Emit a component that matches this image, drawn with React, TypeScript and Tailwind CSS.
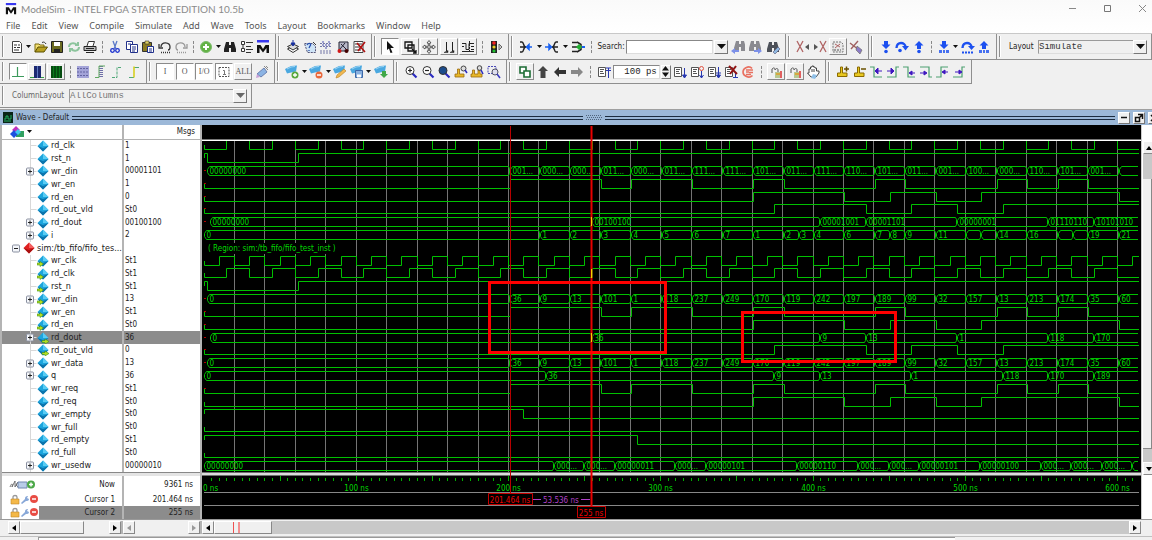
import React from 'react';

type Box = 'up' | 'down';
type Step = [number, number];
type Value = [number, string];

/* ---------- Toolbar icons, 14 x 14 ---------- */

const Sheet = () => (
    <>
        <path d="M1.5 2.5h7v9h-7z" fill="#fff" stroke="#555" />
        <path d="M3 4.5h4M3 6.5h3M3 8.5h4" stroke="#555" />
    </>
);

const Glass = ({ fill }: { fill: string }) => (
    <>
        <path d="M8.5 8.5l4 4" stroke="#2a2ac0" strokeWidth="2.2" />
        <circle cx="6" cy="5.5" r="4" fill={fill} stroke="#333" />
    </>
);

const Flag = () => (
    <>
        <path d="M0 4l6-3 6-.5-1 6-5 1-4 1z" fill="#4aa8e0" />
        <path d="M2 4l4-2 4-.5" stroke="#9cd4f4" fill="none" />
    </>
);

const Binoculars = ({ color }: { color: string }) => (
    <path d="M3 2h3v3h2V2h3l2 7v3H8V8H6v4H1V9z" fill={color} />
);

const BlueArrow = ({ up, dashed }: { up?: boolean; dashed?: boolean }) => (
    <g fill="#1c50f0">
        <path d={up ? 'M7 1l4.5 4.5H9V9H5V5.500H2.500z' : 'M5 1h4v3.500h2.500L7 9 2.500 4.500H5z'} />
        {dashed ? <path d="M2 10h3v3H2zM6 10h2v3H6zM9 10h3v3H9z" opacity=".8" /> : <circle cx="7" cy="11.500" r="1.800" />}
    </g>
);

const Stopper = ({ sign }: { sign: string }) => (
    <>
        <path d="M4.500 8V2h2v6H11v3.500H1.500V8z" fill="#e8c820" stroke="#8a6a00" />
        <path d={sign} stroke="#6a5000" strokeWidth="1.500" />
    </>
);

const ICONS: Record<string, React.ReactNode> = {
    new: (
        <>
            <path d="M2.500 1.500h7l2 2v9h-9z" fill="#fff" stroke="#444" />
            <path d="M4 5h3M8 5h2M4 7.500h2M7 7.500h3M4 10h5" stroke="#333" />
        </>
    ),
    open: (
        <>
            <path d="M1 12V4h4l1 1h4v2" fill="#f5e070" stroke="#7a6a10" />
            <path d="M1 12l3-5h9.500L10 12z" fill="#b8a020" stroke="#5a5000" />
            <path d="M8 2.500c2-1 3 0 4 1.500" stroke="#333" fill="none" />
        </>
    ),
    save: (
        <>
            <path d="M1.500 1.500h11v11h-11z" fill="#6a6a20" stroke="#222" />
            <path d="M4 2h6v4H4z" fill="#fff" />
            <path d="M4 9h6v4H4z" fill="#222" />
        </>
    ),
    refresh: (
        <g stroke="#8cc49c" strokeWidth="2" fill="none">
            <path d="M2 7c0-4 5-5 8-2M12 7c0 4-5 5-8 2" />
            <path d="M8 5h3V2M6 9H3v3" />
        </g>
    ),
    print: (
        <>
            <path d="M4 6l1.500-4.500h6L10 6" fill="#fff" stroke="#333" />
            <path d="M1 6.500h12v4H1z" fill="#bbb" stroke="#222" />
            <path d="M3 12.500h8M3 8.500h8" stroke="#222" strokeWidth="1.200" />
        </>
    ),
    cut: (
        <g fill="none" stroke="#1a30d0" strokeWidth="1.300">
            <path d="M5 1l3 8M9 1L6 9" stroke="#5a78c8" />
            <circle cx="4.500" cy="10.500" r="1.800" />
            <circle cx="9.500" cy="10.500" r="1.800" />
        </g>
    ),
    copy: (
        <g fill="#fff" stroke="#20308a">
            <path d="M1.500 1.500h6v8h-6z" />
            <path d="M5.500 4.500h7v8h-7z" />
            <path d="M3 4h3M7 7h4M7 9h4M7 11h3" />
        </g>
    ),
    paste: (
        <>
            <path d="M1.500 2.500h9v9h-9z" fill="#8a7a20" stroke="#333" />
            <path d="M4 1h4v3H4z" fill="#e0d060" stroke="#333" strokeWidth=".6" />
            <path d="M6.500 6.500h6v6h-6z" fill="#fff" stroke="#20308a" />
            <path d="M8 9h3M8 11h3" stroke="#20308a" />
        </>
    ),
    undo: (
        <g fill="none" stroke="#333" strokeWidth="1.300">
            <path d="M3 7c0-6 9-5 9 0 0 2-1 3-2 3" />
            <path d="M1 4v4h4" />
            <path d="M3 12.500h9" strokeDasharray="1 1" />
        </g>
    ),
    redo: (
        <g fill="none" stroke="#999" strokeWidth="1.300">
            <path d="M11 7c0-6-9-5-9 0 0 2 1 3 2 3" />
            <path d="M13 4v4H9" />
            <path d="M3 12.500h9" strokeDasharray="1 1" />
        </g>
    ),
    add: (
        <>
            <circle cx="7" cy="7" r="5.500" fill="#62b244" stroke="#7cbc6c" />
            <path d="M7 4v6M4 7h6" stroke="#fff" strokeWidth="2" />
        </>
    ),
    find: <Binoculars color="#222" />,
    tree: (
        <g fill="#fff" stroke="#333">
            <path d="M1.500 1.500h3v3h-3zM1.500 8.500h3v3h-3z" />
            <path d="M6 2.500h7M6 6.500h5M6 9.500h7M6 12.500h5M3 5v3" />
        </g>
    ),
    logo: (
        <>
            <path d="M1 0h12v2.500H1z" fill="#3838f0" />
            <path d="M1 13V5h3.500L7 9l2.500-4H13v8h-2.500V8L7 12.500 3.500 8v5z" fill="#111" />
        </>
    ),
    compile: (
        <g fill="#fff" stroke="#333">
            <path d="M1.500 9L7 12.500 12.500 9 7 6z" />
            <path d="M1.500 6.500L7 10l5.500-3.500L7 4z" fill="#ddd" />
            <path d="M7 0v4M5 3l2 3 2-3z" stroke="#1830a0" fill="#1830a0" />
        </g>
    ),
    compileAll: (
        <>
            <path d="M1.500 3.500h8l3 3v6h-8z" fill="#cfe4f6" stroke="#557" strokeDasharray="2 1" />
            <path d="M4 5c2-3 5-1 3 1L6 8M6 10v1" stroke="#2850b0" fill="none" strokeWidth="1.300" />
            <path d="M10 2l3 3" stroke="#333" />
        </>
    ),
    simulate: (
        <g stroke="#7478a8" strokeDasharray="2 1">
            <path d="M1 3.500h12M1 6.500h12M1 11h12M1 13h12" />
            <path d="M4 1v6M7 4v6M10 1v6" stroke="#4a50b0" />
        </g>
    ),
    simStop: (
        <>
            <path d="M3 2h9v9H3z" fill="#b8b8c8" stroke="#223" />
            <path d="M5 4l5 5M9 3l-5 6" stroke="#223" />
            <circle cx="3.500" cy="11" r="2" fill="#d01818" />
            <circle cx="10.500" cy="11" r="2" fill="#400" />
        </>
    ),
    breakSim: (
        <>
            <path d="M2 1.500h9v11H2z" fill="#fff" stroke="#444" />
            <path d="M3 4h7M3 7h5M3 10h6" stroke="#333" />
            <path d="M5 3l8 9M13 2L6 11" stroke="#b01010" strokeWidth="1.600" />
        </>
    ),
    pointer: <path d="M4 1l7 7H7.500l2 4.500-2 .5-1.500-4.500L4 10z" fill="#111" />,
    zoomMode: (
        <g fill="none" stroke="#111" strokeWidth="1.300">
            <path d="M2 2h7v6H2z" />
            <path d="M5 5h6v6H5z" />
            <path d="M9 9l4 4M13 10v3h-3" />
        </g>
    ),
    pan: (
        <g fill="#fff" stroke="#555">
            <path d="M7 .5l2 2.500H7.700v3.300H11V5l2.500 2L11 9V7.700H7.700V11H9l-2 2.500L5 11h1.300V7.700H3V9L.5 7 3 5v1.300h3.300V3H5z" />
        </g>
    ),
    twoCursors: (
        <g stroke="#222" fill="#222">
            <path d="M4.500 2v9M10.500 2v9" />
            <path d="M2 12.500h4v-2zM8 12.500h4v-2z" strokeWidth=".5" />
        </g>
    ),
    edit: (
        <g stroke="#222" fill="none">
            <path d="M1 3.500h4v6h3v-6M8 3.500h5M10 6.500h3M10 9.500h3M1 11.500h12M1 6.500h2" />
            <path d="M8.500 1v12" strokeDasharray="2 1" />
        </g>
    ),
    light: (
        <>
            <path d="M2 1h6v12H2z" fill="#222" />
            <circle cx="5" cy="3" r="1.800" fill="#f02020" />
            <circle cx="5" cy="7" r="1.600" fill="#e8d020" />
            <circle cx="5" cy="11" r="1.600" fill="#20c030" />
            <path d="M10 4l3 3-3 3z" fill="#ccc" stroke="#666" />
        </>
    ),
    sigLeft: (
        <>
            <path d="M1 2h2c2 0 1 5 4 5M1 12h2c2 0 1-5 4-5M1 7h5" stroke="#222" strokeWidth="1.500" fill="none" />
            <path d="M13 7H8M10 4.500L7.500 7l2.500 2.500z" stroke="#1860f0" fill="#1860f0" strokeWidth="1.500" />
        </>
    ),
    sigRight: (
        <>
            <path d="M13 2h-2c-2 0-1 5-4 5M13 12h-2c-2 0-1-5-4-5M13 7H8" stroke="#222" strokeWidth="1.500" fill="none" />
            <path d="M0 7h5M4 4.500L6.500 7 4 9.500z" stroke="#1860f0" fill="#1860f0" strokeWidth="1.500" />
        </>
    ),
    sigBoth: (
        <>
            <path d="M1 2.500h5M1 7h5M1 11.500h5M6 2l4 2.500v5L6 12" stroke="#222" strokeWidth="1.500" fill="none" />
            <path d="M8 4l3 3-3 3-3-3z" fill="#20b030" />
            <path d="M11 7h3" stroke="#1860f0" strokeWidth="2" />
        </>
    ),
    findPrev: (
        <>
            <g transform="translate(2 -1)"><Binoculars color="#8a8a90" /></g>
            <path d="M0 11l4-3v2h4v2H4v2z" fill="#7c90e8" />
        </>
    ),
    findNext: (
        <>
            <g transform="translate(0 -1)"><Binoculars color="#8a8a90" /></g>
            <path d="M14 11l-4-3v2H6v2h4v2z" fill="#7c90e8" />
        </>
    ),
    findOpts: (
        <>
            <Binoculars color="#4c5058" />
            <path d="M7 12l5-5 2 2-5 5z" fill="#90b8e0" stroke="#557" strokeWidth=".6" />
        </>
    ),
    xLeft: (
        <>
            <path d="M1 1l6 11M7 1L1 12" stroke="#b06464" strokeWidth="1.300" />
            <path d="M13 4v6L9 7z" fill="#555" />
        </>
    ),
    xRight: (
        <>
            <path d="M7 1l6 11M13 1L7 12" stroke="#b06464" strokeWidth="1.300" />
            <path d="M1 4v6l4-3z" fill="#555" />
        </>
    ),
    xSheet: (
        <>
            <path d="M2 2h8l2 2v8H2z" fill="#e8e8e8" stroke="#777" strokeDasharray="2 1" />
            <path d="M4 4l5 3M9 4L4 8" stroke="#b06464" />
            <path d="M3 10h7" stroke="#555" strokeDasharray="2 1" />
        </>
    ),
    xOpts: (
        <>
            <path d="M1 3l9 7M9 1L2 9" stroke="#a06060" strokeWidth="1.400" />
            <path d="M8 6l5 4-2 4-4-4z" fill="#8c7cc8" stroke="#665" strokeWidth=".6" />
        </>
    ),
    stepIn: <BlueArrow />,
    stepOver: (
        <>
            <path d="M1.500 8c0-7 9-6 9-1" fill="none" stroke="#1c50f0" strokeWidth="2.400" />
            <path d="M7 6h7l-3.500 4.500z" fill="#1c50f0" />
            <circle cx="5" cy="10.500" r="1.800" fill="#1c50f0" />
        </>
    ),
    stepOut: <BlueArrow up />,
    stepInAll: <BlueArrow dashed />,
    stepOverAll: (
        <>
            <path d="M1.500 8c0-7 9-6 9-1" fill="none" stroke="#1c50f0" strokeWidth="2.400" />
            <path d="M7 6h7l-3.500 4z" fill="#1c50f0" />
            <path d="M1 12.500h12" stroke="#1c50f0" strokeWidth="2" strokeDasharray="2 1" />
        </>
    ),
    stepOutAll: <BlueArrow up dashed />,
    waveLine: <path d="M1 11.500h5.500V2M7 11.500h6" stroke="#3c9a5c" fill="none" strokeWidth="1.200" />,
    waveBlue: (
        <>
            <path d="M4 1h7v12H4z" fill="#1c2870" />
            <path d="M7.500 1v12" stroke="#5c78c0" />
            <path d="M0 12.500h4M11 12.500h3" stroke="#30a040" />
        </>
    ),
    waveFull: (
        <>
            <path d="M2 1h11v12H2z" fill="#064c10" />
            <path d="M4.500 1v12M7.500 1v12M10.500 1v12" stroke="#0a7a1c" />
        </>
    ),
    hatch: (
        <>
            <path d="M1 1h12v12H1z" fill="#a4a4d8" />
            <path d="M1 3.500h12M1 7h12M1 10.500h12" stroke="#6464a0" strokeDasharray="2 1" />
        </>
    ),
    hatchEdge: (
        <>
            <path d="M8 1v12" stroke="#7070a8" strokeWidth="4" strokeDasharray="1 1" />
            <path d="M2 12.500h4V1h6" stroke="#60a860" fill="none" />
        </>
    ),
    edgeGreen: <path d="M2 12.500h5V2.500h5" stroke="#50a878" fill="none" strokeDasharray="3 1" />,
    edgeYellow: (
        <>
            <path d="M2 12.500h5M7 2.500h5" stroke="#50a878" />
            <path d="M7 1.500v11" stroke="#d8d020" strokeWidth="1.600" />
        </>
    ),
    dashedBox: (
        <>
            <path d="M2 2.500h10v9H2z" stroke="#555" fill="none" strokeDasharray="2 1" />
            <path d="M6 5.500h1.500V9M6 9.500h3" stroke="#777" fill="none" />
        </>
    ),
    brush: (
        <>
            <path d="M2 9l7-6 3 4-6 5z" fill="#8cb4e4" stroke="#6a80b0" />
            <path d="M2 9l-1 4 4-1" fill="#c8a0d8" />
            <path d="M9 1l4 4M11 1l2 2" stroke="#888" />
        </>
    ),
    flagAdd: (
        <>
            <Flag />
            <circle cx="10" cy="10" r="3.500" fill="#58a83c" />
            <path d="M10 8v4M8 10h4" stroke="#fff" strokeWidth="1.300" />
        </>
    ),
    flagRemove: (
        <>
            <Flag />
            <circle cx="10" cy="10" r="3.500" fill="#e8683c" />
            <path d="M8 10h4" stroke="#fff" strokeWidth="1.500" />
        </>
    ),
    flagEdit: (
        <>
            <Flag />
            <path d="M3 13l1-3 7-6 2 2-7 6z" fill="#f0b850" stroke="#b88020" strokeWidth=".6" />
        </>
    ),
    flagSave: (
        <>
            <Flag />
            <path d="M5.500 5.500h7v7h-7z" fill="#88b0e0" stroke="#3c68a8" />
            <path d="M7 9.500h4v3H7z" fill="#fff" />
        </>
    ),
    flagLoad: (
        <>
            <Flag />
            <path d="M8 6h4v3h2l-4 4-4-4h2z" fill="#40a848" />
        </>
    ),
    zoomIn: (
        <>
            <Glass fill="#fff" />
            <path d="M6 3.500v4M4 5.500h4" stroke="#222" strokeWidth="1.200" />
        </>
    ),
    zoomOut: (
        <>
            <Glass fill="#fff" />
            <path d="M4 5.500h4" stroke="#222" strokeWidth="1.200" />
        </>
    ),
    zoomFull: <Glass fill="#1c4c8c" />,
    zoomCursor: (
        <>
            <path d="M3.500 9V4h2v5H10v3H1V9z" fill="#e8b828" stroke="#9a6a10" strokeWidth=".8" />
            <circle cx="9.500" cy="3.500" r="2.500" fill="#ddd" stroke="#444" />
            <path d="M11 5l2 3" stroke="#2a2ac0" strokeWidth="1.500" />
        </>
    ),
    zoomCursors: (
        <>
            <path d="M2.500 9V5h2v4H8V5h2v4h2v3H1V9z" fill="#e8b828" stroke="#9a6a10" strokeWidth=".8" />
            <circle cx="9.500" cy="3" r="2.300" fill="#ddd" stroke="#444" />
            <path d="M11 5l2 4" stroke="#2a2ac0" strokeWidth="1.500" />
        </>
    ),
    zoomArea: (
        <>
            <path d="M1 1.500h8v7H1z" stroke="#4a4ab8" fill="none" strokeDasharray="2 1" />
            <circle cx="8" cy="7" r="3" fill="#dde" stroke="#556" />
            <path d="M10 9l3 4" stroke="#3a3ac0" strokeWidth="1.600" />
        </>
    ),
    restart: (
        <g fill="#fff" stroke="#1c6c34" strokeWidth="1.600">
            <path d="M2 2h6v6H2z" />
            <path d="M6 6h6v6H6z" />
        </g>
    ),
    up: <path d="M7 1l5 5H9.500v7h-5V6H2z" fill="#444" />,
    left: <path d="M1 7l5-5v3h7v4H6v3z" fill="#333" />,
    right: <path d="M13 7L8 2v3H1v4h7v3z" fill="#888" />,
    goto: (
        <>
            <Sheet />
            <path d="M11.500 3v10M9 3h5M9 5.500h5" stroke="#2838b0" />
        </>
    ),
    run: (
        <>
            <Sheet />
            <path d="M11.500 3v8M9.500 10l2 3 2-3z" stroke="#2838b0" fill="#2838b0" />
        </>
    ),
    runCont: (
        <>
            <Sheet />
            <path d="M11.500 6v7M9.500 10l2 3 2-3" stroke="#2838b0" fill="none" />
            <circle cx="11.500" cy="3.500" r="2" stroke="#e05040" fill="none" />
        </>
    ),
    runAll: (
        <>
            <Sheet />
            <path d="M11.500 2v9M9 8h5M9.500 10l2 3 2-3z" stroke="#2838b0" fill="#2838b0" />
        </>
    ),
    breakRun: (
        <>
            <Sheet />
            <path d="M11.500 8v5M9 12.500h5" stroke="#2838b0" />
            <path d="M5 1l8 8M12 1L6 9" stroke="#901414" strokeWidth="2" />
        </>
    ),
    stop: (
        <path
            d="M11 3.500C8 0 2 3 2 7s6 7 9.500 3.500M5 5h7M5 7h3M8 7.500h4M5 9.500h5"
            stroke="#e87060"
            fill="none"
            strokeWidth="1.600"
        />
    ),
    perf: (
        <>
            <path d="M3 8V4c2-2 3-1 3 1 1-2 3-2 3 0v4" stroke="#555" fill="none" />
            <path d="M6 7h7v6H6z" fill="#b8c890" />
            <path d="M11 6h2v7h-2z" fill="#e06060" />
            <path d="M7 9h4" stroke="#d8a840" strokeWidth="2" />
        </>
    ),
    hand: (
        <>
            <path d="M3 8V4h1.500V2H6V1h1.500v1H9v1h1.500v3H13v2l-3 4H5L1.500 8z" fill="#fff" stroke="#444" />
            <path d="M6 4v3M8 4v3" stroke="#444" />
            <path d="M7 9l4 1-2 4-4-1z" fill="#90c0e8" />
        </>
    ),
    curAdd: <Stopper sign="M8 4h5M10.500 1.500v5" />,
    curDel: <Stopper sign="M8 4h5" />,
    ...Object.fromEntries(
        (
            [
                ['prevTrans', 'M1 2h4v10h8', 'M13 6H7M9 3L6 6l3 3z'],
                ['nextTrans', 'M13 2h-3v10H1', 'M1 6h6M5 3l3 3-3 3z'],
                ['prevFall', 'M1 2h5v10h7', 'M13 8H8M10 6L7 8l3 2z'],
                ['nextFall', 'M1 2h9v10h3', 'M1 8h6M5 6l3 2-3 2z'],
                ['prevRise', 'M1 12h5V2h7', 'M13 7H8M10 5L7 7l3 2z'],
                ['nextRise', 'M1 12h9V2h3', 'M3 7h5M7 5l3 2-3 2z'],
            ] as const
        ).map(([key, edge, arrow]) => [
            key,
            <React.Fragment key={key}>
                <path d={edge} stroke="#4ca070" fill="none" strokeWidth="1.200" />
                <path d={arrow} stroke="#4018c0" fill="#4018c0" />
            </React.Fragment>,
        ])
    ),
};

const Tool = ({ icon, box, text }: { icon: string; box?: Box; text?: string }) => {
    const frame =
        box === 'up'
            ? 'w-[18px] h-[17px] border border-t-white border-l-white border-r-[#8a8a8a] border-b-[#8a8a8a]'
            : box === 'down'
              ? 'w-[18px] h-[17px] bg-white border border-t-[#8a8a8a] border-l-[#8a8a8a] border-r-white border-b-white'
              : 'w-4 h-[17px]';
    return (
        <button type="button" aria-label={icon} className={`flex shrink-0 items-center justify-center ${frame}`}>
            {text ? (
                <span className="font-['Liberation_Serif',serif] text-[8px] leading-none text-[#555]">{text}</span>
            ) : (
                <svg className="size-[14px] shrink-0" viewBox="0 0 14 14">
                    {ICONS[icon]}
                </svg>
            )}
        </button>
    );
};

const Drop = () => (
    <button type="button" aria-label="more" className="flex w-[7px] shrink-0 items-center justify-center">
        <svg className="h-[3px] w-[5px]" viewBox="0 0 5 3">
            <path d="M0 0h5L2.500 3z" fill="#111" />
        </svg>
    </button>
);

const Sep = () => (
    <div className="flex w-2 shrink-0 justify-center">
        <div className="h-3 border-l border-dashed border-[#888]" />
    </div>
);

/* Draws a run of plain tools; "|" is a separator and "v" a drop-down arrow */
const Tools = ({ list }: { list: string }) => (
    <>
        {list.split(' ').map((name, i) => {
            if (name === '|') return <Sep key={i} />;
            if (name === 'v') return <Drop key={i} />;
            const [icon, box] = name.split(':');
            return <Tool key={i} icon={icon} box={box as Box | undefined} />;
        })}
    </>
);

const Group = ({ width, children }: { width: string; children: React.ReactNode }) => (
    <div className={`flex shrink-0 border-r border-b border-[#8f8f8f] pt-[2px] pb-[2px] pl-[2px] ${width}`}>
        <div className="w-px bg-[#8f8f8f]" />
        <div className="w-px bg-white" />
        <div className="flex min-w-0 flex-1 items-center justify-between pr-1 pl-[5px]">{children}</div>
    </div>
);

const Combo = ({ id, value, width, dim }: { id: string; value: string; width: string; dim?: boolean }) => (
    <div className={`relative flex h-[14px] ${width}`}>
        <select
            id={id}
            defaultValue={value}
            className={`w-full appearance-none border border-t-[#9a9a9a] border-l-[#9a9a9a] border-r-[#ddd] border-b-[#ddd] bg-[#f0f0f0] pt-[2px] font-['Liberation_Mono',monospace] text-[9px] leading-none ${dim ? 'text-[#777]' : 'text-[#333]'}`}
        >
            <option>{value}</option>
        </select>
        <span className="pointer-events-none absolute top-0 right-0 flex h-[14px] w-[14px] items-center justify-center border border-t-white border-l-white border-r-[#777] border-b-[#777] bg-[#f0f0f0]">
            <svg className="h-[5px] w-[9px]" viewBox="0 0 9 5">
                <path d="M0 0h9L4.500 5z" fill={dim ? '#666' : '#111'} />
            </svg>
        </span>
    </div>
);

/* ---------- Signal list ---------- */

type Kind = 'plain' | 'port' | 'out' | 'scope';

const SIGNALS: { name: string; value: string; bus?: boolean; kind?: Kind }[] = [
    { name: 'rd_clk', value: '1' },
    { name: 'rst_n', value: '1' },
    { name: 'wr_din', value: '00001101', bus: true },
    { name: 'wr_en', value: '1' },
    { name: 'rd_en', value: '0' },
    { name: 'rd_out_vld', value: 'St0' },
    { name: 'rd_dout', value: '00100100', bus: true },
    { name: 'i', value: '2', bus: true },
    { name: 'sim:/tb_fifo/fifo_tes...', value: '', kind: 'scope' },
    { name: 'wr_clk', value: 'St1', kind: 'port' },
    { name: 'rd_clk', value: 'St1', kind: 'port' },
    { name: 'rst_n', value: 'St1', kind: 'port' },
    { name: 'wr_din', value: '13', bus: true, kind: 'port' },
    { name: 'wr_en', value: 'St1', kind: 'port' },
    { name: 'rd_en', value: 'St0', kind: 'port' },
    { name: 'rd_dout', value: '36', bus: true, kind: 'out' },
    { name: 'rd_out_vld', value: '0', kind: 'out' },
    { name: 'wr_data', value: '13', bus: true },
    { name: 'q', value: '36', bus: true },
    { name: 'wr_req', value: 'St1' },
    { name: 'rd_req', value: 'St0' },
    { name: 'wr_empty', value: 'St0' },
    { name: 'wr_full', value: 'St0' },
    { name: 'rd_empty', value: 'St1' },
    { name: 'rd_full', value: 'St0' },
    { name: 'wr_usedw', value: '00000010', bus: true },
];
const SELECTED = 15;

const Toggle = ({ open }: { open?: boolean }) => (
    <>
        <rect x="3.500" y="3" width="7" height="7" rx="1" fill="#f4f6fa" stroke="#8a90a0" />
        <path d={open ? 'M5 6.500h4' : 'M5 6.500h4M7 4.500v4'} stroke="#222" />
    </>
);

const Diamond = ({ kind }: { kind: Kind }) => (
    <svg className="h-3 w-3 shrink-0" viewBox="0 0 12 12">
        <path d="M6 .5L11.500 6 6 11.500.5 6z" fill={kind === 'scope' ? '#e02020' : '#1ca4dc'} />
        <path d="M6 .5L11.500 6 6 6z" fill={kind === 'scope' ? '#f46060' : '#58ccf4'} />
        <path d="M.5 6L6 11.500 11.500 6 6 8z" fill={kind === 'scope' ? '#a81010' : '#0c74ac'} />
        {kind === 'port' && <path d="M0 8h3V6.500L6.500 9 3 11.500V10H0z" fill="#b8e020" stroke="#3c9020" strokeWidth=".6" />}
        {kind === 'out' && <path d="M5 8.500h3V7l4 2.500L8 12v-1.500H5z" fill="#b8e020" stroke="#3c9020" strokeWidth=".6" />}
    </svg>
);

const SignalTable = () => (
    <table className="h-[347px] w-full table-fixed border-collapse bg-white">
        <colgroup>
            <col className="w-[121px]" />
            <col />
        </colgroup>
        <thead>
            <tr>
                <th className="h-[14px] border-r-2 border-b border-[#b4b4b4] p-0">
                    <button type="button" aria-label="Signal options" className="flex items-center gap-[3px] pl-2">
                        <svg className="h-3 w-[14px]" viewBox="0 0 14 12">
                            <path d="M6 0l4 4-4 3-4-3z" fill="#c030c0" />
                            <path d="M6 5h8v6H6z" fill="#30a060" />
                            <path d="M4 4l4 4-4 4-4-4z" fill="#1c50e0" />
                            <path d="M8 3l3 3-3 3-3-3z" fill="#40c8f0" />
                        </svg>
                        <svg className="h-[3px] w-[5px]" viewBox="0 0 5 3">
                            <path d="M0 0h5L2.500 3z" fill="#111" />
                        </svg>
                    </button>
                </th>
                <th className="h-[14px] border-b border-[#b4b4b4] p-0 pr-[5px] text-right leading-none font-normal">Msgs</th>
            </tr>
        </thead>
        <tbody>
            {SIGNALS.map((s, i) => (
                <tr key={i} className={i === SELECTED ? 'bg-[#8c8c8c]' : ''}>
                    <td className="overflow-hidden border-r-2 border-[#b4b4b4] p-0">
                        <div className={`flex h-3 items-center ${s.kind === 'scope' ? 'pl-[7px]' : 'pl-[21px]'}`}>
                            <svg className="h-[13px] w-[14px] shrink-0 overflow-visible" viewBox="0 0 14 13">
                                {s.kind !== 'scope' && <path d="M7.500 -1v15M7.500 6.500h6" stroke="#d8d8d8" />}
                                {s.bus && <Toggle />}
                                {s.kind === 'scope' && <Toggle open />}
                            </svg>
                            <Diamond kind={s.kind ?? 'plain'} />
                            <span className="pl-[2px] text-[9px] leading-none whitespace-nowrap">{s.name}</span>
                        </div>
                    </td>
                    <td className="p-0 pl-px leading-none">{s.value}</td>
                </tr>
            ))}
        </tbody>
    </table>
);

const CURSORS = [
    { name: 'Now', time: '9361 ns' },
    { name: 'Cursor 1', time: '201.464 ns' },
    { name: 'Cursor 2', time: '255 ns' },
];

const CursorTable = () => (
    <table className="h-[43px] w-full table-fixed border-collapse bg-white">
        <colgroup>
            <col className="w-[37px]" />
            <col className="w-[84px]" />
            <col />
        </colgroup>
        <tbody>
            {CURSORS.map((c, i) => (
                <tr key={c.name} className={i === 0 ? 'h-[17px]' : 'h-[13px]'}>
                    <td className="p-0 pl-[7px]">
                        <svg className="h-[11px] w-[30px]" viewBox="0 0 30 11">
                            {i === 0 ? (
                                <>
                                    <path d="M1 8c2-5 3-3 2 0l3-6v6l3-5-2 3 3 3" stroke="#666" fill="none" strokeWidth=".9" />
                                    <path d="M9 3h9v6H9z" fill="#b8cce8" stroke="#7088b0" />
                                    <circle cx="22" cy="5.500" r="4" fill="#4ca848" />
                                    <path d="M22 3.500v4M20 5.500h4" stroke="#fff" strokeWidth="1.500" />
                                </>
                            ) : (
                                <>
                                    <path d="M4 5V3c0-2 4-2 4 0v2" stroke="#999" fill="none" strokeWidth="1.300" />
                                    <path d="M2 5h8v5H2z" fill="#f4b848" stroke="#c08828" strokeWidth=".6" />
                                    <path d="M12 9l4-4c0-3 2-3 3-3l-1 2 2 1c0 2-2 2-3 2l-4 3z" fill="#88a8d8" />
                                    <circle cx="25" cy="5" r="4" fill="#e84c44" />
                                    <path d="M23 5h4" stroke="#fff" strokeWidth="1.500" />
                                </>
                            )}
                        </svg>
                    </td>
                    <td className={`border-r-2 border-[#b4b4b4] p-0 pr-[7px] text-right leading-none ${i === 2 ? 'bg-[#8c8c8c]' : ''}`}>
                        {c.name}
                    </td>
                    <td className={`p-0 pr-[7px] text-right leading-none ${i === 2 ? 'bg-[#8c8c8c]' : ''}`}>{c.time}</td>
                </tr>
            ))}
        </tbody>
    </table>
);

/* ---------- Waveforms ---------- */

const END = 1139;
const ROW = 333 / 26;
const tx = (t: number) => Math.round(203.5 + 1.5225 * t) + 0.5;
const rowMid = (i: number) => Math.round(139 + ROW * (i + 0.5));

const toggles = (period: number): Step[] =>
    Array.from({ length: Math.floor(1230 / period) + 1 }, (_, k): Step => [(k * period) / 2, k % 2]);

const RST: Step[] = [[0, 1], [2, 0], [62, 1]];
const WR_EN: Step[] = [
    [0, 0], [201, 1], [261, 0], [281, 1], [321, 0], [361, 1], [381, 0], [441, 1],
    [461, 0], [521, 1], [541, 0], [561, 1], [581, 0],
];
const RD_EN: Step[] = [[0, 0], [361, 1], [421, 0], [451, 1], [481, 0], [511, 1], [601, 0]];
const VLD: Step[] = [[0, 0], [375, 1], [435, 0], [465, 1], [495, 0], [525, 1]];

const BITS: Record<number, Step[]> = {
    0: toggles(30), 1: RST, 3: WR_EN, 4: RD_EN, 5: VLD,
    9: toggles(20), 10: toggles(30), 11: RST, 13: WR_EN, 14: RD_EN, 16: VLD,
    19: WR_EN, 20: RD_EN,
    21: [[0, 1], [210, 0]],
    22: [[0, 0]],
    23: [[0, 1], [285, 0]],
    24: [[0, 0]],
};

const every20 = (list: string): Value[] => list.split(' ').map((v, k): Value => [201 + 20 * k, v]);
const DIN = every20('36 9 13 101 1 118 237 249 170 119 242 197 189 99 32 157 13 213 174 35 60');
const DIN_BIN = every20(
    '001... 000... 000... 011... 000... 011... 111... 111... 101... 011... 111... 110... 101... 011... 001... 100... 000... 110... 101... 001... '
);

const BUSES: Record<number, Value[]> = {
    2: [[2, '00000000'], ...DIN_BIN],
    6: [[4, '00000000'], [255, '00100100'], [405, '00001001'], [435, '00001101'], [495, '00000001'], [555, '01110110'], [585, '10101010']],
    7: [
        [0, '0'], [221, '1'], [241, '2'], [261, '3'], [281, '4'], [301, '5'], [321, '6'], [341, '7'], [361, '1'],
        [381, '2'], [391, '3'], [401, '4'], [421, '6'], [441, '7'], [451, '8'], [461, '9'], [481, '11'], [501, ''],
        [511, ''], [521, '14'], [541, '16'], [561, ''], [571, ''], [581, '19'], [601, '21'],
    ],
    12: [[2, '0'], ...DIN],
    15: [[4, '0'], [255, '36'], [405, '9'], [435, '13'], [495, '1'], [555, '118'], [585, '170']],
    17: [[2, '0'], ...DIN],
    18: [[0, '0'], [225, '36'], [375, '9'], [405, '13'], [465, '1'], [525, '118'], [555, '170'], [585, '189']],
    25: [
        [0, '00000000'], [230, '000...'], [250, '000...'], [270, '00000011'], [310, '000...'], [330, '00000101'],
        [390, '00000110'], [430, '000...'], [450, '000...'], [470, '00000101'], [510, '00000100'], [550, '000...'],
        [570, '000...'], [590, '000...'], [610, ''],
    ],
};

/* Rows whose value is unknown for the first moments get a red mark */
const UNKNOWN = [2, 3, 4, 5, 6, 12, 13, 14, 15, 16, 17, 19];

const bitPath = (row: number, steps: Step[]) => {
    const y = (v: number) => rowMid(row) + (v ? -4.5 : 4.5);
    let d = `M${tx(0)} ${rowMid(row)}V${y(steps[0][1])}`;
    steps.slice(1).forEach(([t, v]) => {
        if (tx(t) < END) d += `H${tx(t)}V${y(v)}`;
    });
    return d + `H${END}`;
};

/* Each value is a box whose two ends lean in like brackets */
const busPath = (row: number, values: Value[]) => {
    const top = rowMid(row) - 4.5;
    const bottom = rowMid(row) + 4.5;
    return values
        .map(([t], k) => {
            const x = tx(t);
            const last = k + 1 >= values.length;
            const next = last ? END : tx(values[k + 1][0]) - 1;
            const tail = last ? '' : `M${next - 1} ${top}L${next} ${top + 2}V${bottom - 2}L${next - 1} ${bottom}`;
            return `M${next - 1} ${top}H${x + 2}L${x} ${top + 3}V${bottom - 3}L${x + 2} ${bottom}H${next - 1}${tail}`;
        })
        .join('');
};

const Waves = () => (
    <svg className="h-[394px] w-[939px] shrink-0" viewBox="202 125 939 394">
        <clipPath id="trace">
            <path d="M202 141h939v331H202z" />
        </clipPath>
        <g clipPath="url(#trace)" fill="none">
            {Array.from({ length: 30 }, (_, k) => (
                <path key={k} d={`M${tx(20 * (k + 1))} 141V472`} stroke="#747474" />
            ))}
            <path d="M205 243h130v11H205z" fill="#000" />
            {Object.entries(BITS).map(([row, steps]) => (
                <path key={row} d={bitPath(Number(row), steps)} stroke="#00c000" />
            ))}
            {Object.entries(BUSES).map(([row, values]) => (
                <path key={row} d={busPath(Number(row), values)} stroke="#00c000" />
            ))}
            {UNKNOWN.map((row) => (
                <path key={row} d={`M204 ${rowMid(row) - 0.5}h2`} stroke="#b00000" />
            ))}
            {Object.entries(BUSES).flatMap(([row, values]) =>
                values.map(([t, v]) => (
                    <text key={`${row}-${t}`} x={tx(t) + 2} y={rowMid(Number(row)) + 3} fill="#00d800">
                        {v}
                    </text>
                ))
            )}
            <text x="208" y={rowMid(8) + 3} fill="#00d800">
                ( Region: sim:/tb_fifo/fifo_test_inst )
            </text>
        </g>
        <path d="M202 139.500h939" stroke="#777" />
        <path d="M202 140.500h939" stroke="#fff" />
        <path d="M202 474h939" stroke="#dcdcdc" strokeWidth="3" />

        {/* Time ruler */}
        {Array.from({ length: 122 }, (_, k) => (
            <path key={k} d={`M${tx(5 * (k + 1))} ${(k + 1) % 10 ? 478 : 476}v${(k + 1) % 10 ? 3 : 5}`} stroke="#00b000" />
        ))}
        <text x="203" y="491" fill="#00d800">0 ns</text>
        {[100, 200, 300, 400, 500, 600].map((t) => (
            <text key={t} x={tx(t)} y="491" textAnchor="middle" fill="#00d800">
                {t} ns
            </text>
        ))}
        <path d={`M204 492.500H${END}M204 505.500H${END}`} stroke="#888" />

        {/* Cursors */}
        <path d="M510.500 126V493" stroke="#b80000" />
        <path d="M591.500 126V506" stroke="#e80000" strokeWidth="2" />
        <path d="M591.500 217v9M591.500 269v9M591.500 333v9" stroke="#f8d000" />
        <path d="M533 499.500h8M581 499.500h9" stroke="#b040c8" />
        <text x="543" y="503" fill="#b040c8">53.536 ns</text>
        <path d="M488.500 493.500h44v11h-44zM577.500 506.500h28v11h-28z" fill="#000" stroke="#c80000" />
        <text x="510" y="503" textAnchor="middle" fill="#f00000">201.464 ns</text>
        <text x="591" y="516" textAnchor="middle" fill="#f00000">255 ns</text>

        {/* Marked regions */}
        <path d="M489.500 282.500h176v70h-176zM742.500 312.500h153v49h-153z" fill="none" stroke="#ff0000" strokeWidth="3" />
    </svg>
);

/* ---------- Scroll bars ---------- */

const ARROWS = {
    left: 'M6 1v6L2 4z',
    right: 'M2 1v6l4-3z',
    up: 'M1 6h6L4 2z',
    down: 'M1 2h6L4 6z',
};

const ScrollButton = ({ dir, dim }: { dir: keyof typeof ARROWS; dim?: boolean }) => (
    <button
        type="button"
        aria-label={`Scroll ${dir}`}
        className="flex h-[13px] w-[12px] shrink-0 items-center justify-center border border-t-white border-l-white border-r-[#888] border-b-[#888] bg-[#f0f0f0]"
    >
        <svg className="size-2" viewBox="0 0 8 8">
            <path d={ARROWS[dir]} fill={dim ? '#999' : '#000'} />
        </svg>
    </button>
);

const MENU = ['File', 'Edit', 'View', 'Compile', 'Simulate', 'Add', 'Wave', 'Tools', 'Layout', 'Bookmarks', 'Window', 'Help'];

const App: React.FC = () => (
    <div className="flex min-h-screen flex-col overflow-hidden bg-[#f0f0f0] font-['DejaVu_Sans_Condensed','DejaVu_Sans',sans-serif] text-[8px] text-[#222]">
        {/* Title bar */}
        <header className="bg-linear-to-b from-[#fafafa] to-white font-['Noto_Sans',sans-serif]">
            <div className="flex h-[17px] items-center px-[5px] text-[#8a8a8a]">
                <svg className="mr-1 size-3" viewBox="0 0 14 14">
                    {ICONS.logo}
                </svg>
                <h1 className="flex-1 font-['Lato',sans-serif] text-[10px] leading-none">ModelSim - INTEL FPGA STARTER EDITION 10.5b</h1>
                <div className="flex items-center gap-[26px]">
                    <button type="button" aria-label="Minimize">
                        <svg className="size-[9px]" viewBox="0 0 9 9"><path d="M1 4.500h7" stroke="#888" /></svg>
                    </button>
                    <button type="button" aria-label="Maximize">
                        <svg className="size-[9px]" viewBox="0 0 9 9"><path d="M1.500 1.500h6v6h-6z" stroke="#777" fill="none" /></svg>
                    </button>
                    <button type="button" aria-label="Close">
                        <svg className="size-[9px]" viewBox="0 0 9 9"><path d="M1 1l7 7M8 1L1 8" stroke="#888" /></svg>
                    </button>
                </div>
            </div>
            <nav className="flex h-[17px] items-center gap-[11px] border-b border-[#c8c8c8] px-[6px] pt-px text-[9px] leading-none text-[#555]">
                {MENU.map((item) => (
                    <button type="button" key={item}>{item}</button>
                ))}
            </nav>
        </header>

        {/* Toolbars */}
        <div className="flex h-[26px]">
            <Group width="w-[276px]">
                <Tools list="new v open save refresh print | cut copy paste undo redo | add v find tree logo" />
            </Group>
            <Group width="w-[96px]">
                <Tools list="compile compileAll simulate simStop breakSim" />
            </Group>
            <Group width="w-[137px]">
                <Tools list="pointer:down zoomMode:up pan:up twoCursors:up edit:up | light" />
            </Group>
            <Group width="w-[277px]">
                <Tools list="sigLeft v sigRight v sigBoth |" />
                <label htmlFor="search">Search:</label>
                <div className="flex h-[14px] w-[102px] gap-px">
                    <input id="search" className="min-w-0 flex-1 border border-t-[#888] border-l-[#888] border-r-[#ddd] border-b-[#ddd] bg-white" />
                    <button type="button" aria-label="Search history" className="flex w-[14px] items-center justify-center border border-t-white border-l-white border-r-[#777] border-b-[#777]">
                        <svg className="h-[5px] w-[9px]" viewBox="0 0 9 5"><path d="M0 0h9L4.500 5z" fill="#111" /></svg>
                    </button>
                </div>
                <Tools list="findPrev findNext findOpts" />
            </Group>
            <Group width="w-[83px]">
                <Tools list="xLeft xRight xSheet:up xOpts" />
            </Group>
            <Group width="w-[128px]">
                <Tools list="stepIn stepOver stepOut | stepInAll v stepOverAll stepOutAll" />
            </Group>
            <Group width="flex-1">
                <label htmlFor="layout" className="pl-[3px]">Layout</label>
                <Combo id="layout" value="Simulate" width="w-[109px]" />
            </Group>
        </div>
        <div className="flex h-[24px]">
            <Group width="w-[147px]">
                <Tools list="waveLine:down waveBlue:up waveFull:up | hatch hatchEdge edgeGreen edgeYellow" />
            </Group>
            <Group width="w-[128px]">
                <Tool icon="inputs" box="down" text="I" />
                <Tool icon="outputs" box="down" text="O" />
                <Tool icon="inouts" box="down" text="I/O" />
                <Tool icon="dashedBox" box="down" />
                <Tool icon="all" box="up" text="ALL" />
                <Tool icon="brush" />
            </Group>
            <Group width="w-[119px]">
                <Tools list="flagAdd v flagRemove v flagEdit flagSave v flagLoad" />
            </Group>
            <Group width="w-[113px]">
                <Tools list="zoomIn zoomOut zoomFull zoomCursor zoomCursors zoomArea" />
            </Group>
            <Group width="w-[319px]">
                <Tools list="restart:up up left right | goto" />
                <div className="flex h-[14px] w-[58px] gap-px">
                    <input
                        aria-label="Run length"
                        defaultValue="100 ps"
                        className="min-w-0 flex-1 border border-t-[#888] border-l-[#888] border-r-[#ddd] border-b-[#ddd] bg-white pr-[2px] text-right font-['Liberation_Mono',monospace] text-[9px] leading-none"
                    />
                    <button type="button" aria-label="Change run length" className="flex w-[10px] items-center justify-center border border-t-white border-l-white border-r-[#777] border-b-[#777]">
                        <svg className="h-[11px] w-[7px]" viewBox="0 0 7 11"><path d="M0 4.500h7L3.500 0zM0 6.500h7L3.500 11z" fill="#111" /></svg>
                    </button>
                </div>
                <Tools list="run runCont runAll breakRun stop | perf:up perf:up hand" />
            </Group>
            <Group width="w-[146px]">
                <Tools list="curAdd curDel prevTrans nextTrans prevFall nextFall prevRise nextRise" />
            </Group>
        </div>
        <div className="flex h-[24px]">
            <Group width="w-[252px]">
                <label htmlFor="columns" className="pl-[3px] text-[#666]">ColumnLayout</label>
                <Combo id="columns" value="AllColumns" width="w-[178px]" dim />
            </Group>
        </div>

        {/* Wave window title */}
        <div className="mt-px flex h-4 items-center gap-[3px] border-t border-[#a0a0a0] bg-[#9cb8d8] pl-[3px]">
            <svg className="h-[11px] w-[10px]" viewBox="0 0 10 11">
                <path d="M0 0h10v11H0z" fill="#0a2418" />
                <path d="M1 7h2V4h2v3h3V3M1 9h7" stroke="#20b060" fill="none" />
            </svg>
            <h2 className="leading-none">Wave - Default</h2>
            <div className="h-1 flex-1 border-y border-[#1c2c40]" />
            <svg className="h-[7px] w-4" viewBox="0 0 16 7">
                <path d="M0 1.500h16M1 3.500h15M0 5.500h16" stroke="#50647c" strokeDasharray="1 1" />
            </svg>
            <div className="h-1 flex-1 border-y border-[#1c2c40]" />
            {['M2 4.500h6', 'M1.500 4.500h4v4h-4zM4 1.500h4.500V6M5 5l3-3', 'M2 2l6 6M8 2L2 8'].map((d, i) => (
                <button
                    type="button"
                    key={d}
                    aria-label={['Minimize pane', 'Undock pane', 'Close pane'][i]}
                    className="size-3 shrink-0 border border-t-white border-l-white border-r-[#777] border-b-[#777] bg-[#f0f0f0] last:-mr-2"
                >
                    <svg className="size-[10px]" viewBox="0 0 10 10"><path d={d} stroke="#111" strokeWidth="1.500" fill="none" /></svg>
                </button>
            ))}
        </div>

        {/* Wave window */}
        <main className="flex">
            <section className="flex w-[202px] shrink-0 flex-col border-l-2 border-[#b4b4b4] border-r-2">
                <SignalTable />
                <div className="h-1 border-t border-[#888] bg-[#e4e4e4]" />
                <CursorTable />
            </section>
            <section className="min-w-0 flex-1 overflow-hidden bg-black">
                <Waves />
            </section>
            <aside className="flex w-[11px] shrink-0 flex-col overflow-hidden border-l border-[#ccc] bg-white pt-4 pl-px">
                <ScrollButton dir="up" />
                <div className="h-[25px] bg-[#c8c8c8]" />
                <div className="h-[270px] border-r border-b border-[#888] bg-[#f0f0f0]" />
                <div className="h-[13px] bg-[#c8c8c8]" />
                <ScrollButton dir="down" />
            </aside>
        </main>
        <div className="flex items-center border-t border-[#999] pt-px">
            <div className="flex w-[123px] pl-2">
                <ScrollButton dir="left" />
                <div className="h-[13px] w-16 border border-t-white border-l-white border-r-[#888] border-b-[#888]" />
                <div className="flex-1" />
                <ScrollButton dir="right" />
                <div className="w-[2px] bg-[#b4b4b4]" />
            </div>
            <div className="flex w-[79px] justify-between border-r-2 border-[#b4b4b4]">
                <ScrollButton dir="left" dim />
                <ScrollButton dir="right" dim />
            </div>
            <div className="flex min-w-0 flex-1 bg-[#c8c8c8]">
                <ScrollButton dir="left" />
                <div className="flex h-[13px] w-[58px] gap-1 border border-t-white border-l-white border-r-[#888] border-b-[#888] bg-[#f0f0f0] pl-[18px]">
                    <div className="w-px bg-[#f05050]" />
                    <div className="w-[2px] bg-[#f49090]" />
                </div>
                <div className="flex-1" />
                <ScrollButton dir="right" />
            </div>
            <div className="w-[11px]" />
        </div>
        <footer className="mt-[2px] flex h-[4px] border-t border-[#c0c0c0] pl-[38px]">
            <div className="w-[917px] border-t border-l border-[#999] bg-white" />
        </footer>
    </div>
);

export default App;
